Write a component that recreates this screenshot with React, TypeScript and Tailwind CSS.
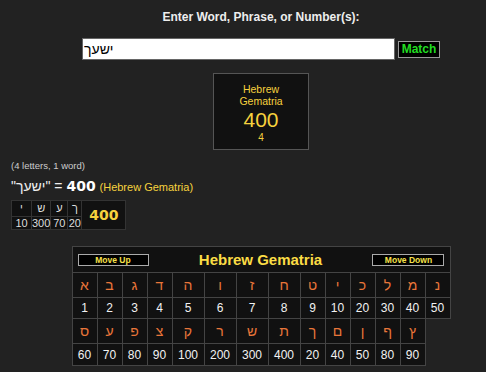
const ROW_A: [string, number][] = [
  ['א', 1], ['ב', 2], ['ג', 3], ['ד', 4], ['ה', 5], ['ו', 6], ['ז', 7],
  ['ח', 8], ['ט', 9], ['י', 10], ['כ', 20], ['ל', 30], ['מ', 40], ['נ', 50],
];

const ROW_B: [string, number][] = [
  ['ס', 60], ['ע', 70], ['פ', 80], ['צ', 90], ['ק', 100], ['ר', 200], ['ש', 300],
  ['ת', 400], ['ך', 20], ['ם', 40], ['ן', 50], ['ף', 80], ['ץ', 90],
];

// widest values (100..400) get the wider columns
const COLS = [
  'w-[25px]', 'w-[25px]', 'w-[25px]', 'w-[25px]', 'w-[32px]', 'w-[32px]', 'w-[32px]',
  'w-[32px]', 'w-[25px]', 'w-[25px]', 'w-[25px]', 'w-[25px]', 'w-[25px]', 'w-[25px]',
];

const WORD: [string, number][] = [['י', 10], ['ש', 300], ['ע', 70], ['ך', 20]];
const WORD_COLS = ['w-[20px]', 'w-[18px]', 'w-[17px]', 'w-[14px]'];

const cell = 'border border-[#444] bg-[#111] p-0 text-center align-middle';

function LetterRows({ row, numH }: { row: [string, number][]; numH: string }) {
  return (
    <>
      <tr>
        {row.map(([ch]) => (
          <td key={ch} className={`${cell} h-[25px] text-[14px] leading-[18px] text-[#e9763a]`}>
            {ch}
          </td>
        ))}
      </tr>
      <tr>
        {row.map(([ch, n]) => (
          <td key={ch} className={`${cell} ${numH} text-[12px] leading-[14px] text-[#f2f2f2]`}>
            {n}
          </td>
        ))}
      </tr>
    </>
  );
}

export default function App() {
  return (
    <div className="min-h-[372px] w-[486px] bg-[#222] font-['Liberation_Sans','DejaVu_Sans',sans-serif]">
      <div className="flex flex-col items-center pl-[36px] pt-[10px]">
        <div className="text-[12px] leading-[14px] font-bold text-[#eee]">
          Enter Word, Phrase, or Number(s):
        </div>

        <div className="mt-[14px] flex items-center gap-[3px]">
          <input
            readOnly
            value="ישעך"
            className="h-[22px] w-[313px] border border-[#666] bg-white px-[1px] text-[14px] text-black outline-none"
          />
          <button
            type="button"
            className="h-[17px] w-[42px] border border-[#999] bg-black text-[12px] leading-[15px] font-bold text-[#22dd22]"
          >
            Match
          </button>
        </div>

        <div className="mt-[13px] flex h-[77px] w-[96px] flex-col items-center border border-[#555] bg-[#111] pt-[10px] text-[#f7d23e]">
          <span className="text-[10.5px] leading-[11.5px]">Hebrew</span>
          <span className="text-[10.5px] leading-[11.5px]">Gematria</span>
          <span className="mt-[1px] text-[21px] leading-[24px]">400</span>
          <span className="text-[10px] leading-[12px]">4</span>
        </div>
      </div>

      <div className="px-[11px] pt-[10px]">
        <div className="text-[9.5px] leading-[12px] text-[#ccc]">(4 letters, 1 word)</div>
        <div className="mt-[5px] text-[14px] leading-[18px] text-[#eee]">
          "<bdi>ישעך</bdi>" ={' '}
          <span className="font-['DejaVu_Sans',sans-serif] font-bold text-white">400</span>{' '}
          <span className="text-[11px] text-[#f7d23e]">(Hebrew Gematria)</span>
        </div>

        <table className="mt-[4px] table-fixed border-collapse">
          <colgroup>
            {WORD_COLS.map((w, i) => (
              <col key={i} className={w} />
            ))}
            <col className="w-[44px]" />
          </colgroup>
          <tbody>
            <tr>
              {WORD.map(([ch]) => (
                <td key={ch} className="h-[16px] border border-[#333] bg-[#111] p-0 text-center text-[11px] leading-[13px] text-[#ddd]">
                  {ch}
                </td>
              ))}
              <td
                rowSpan={2}
                className="border border-[#333] bg-[#111] p-0 text-center font-['DejaVu_Sans',sans-serif] text-[14px] leading-[17px] font-bold text-[#f7d23e]"
              >
                400
              </td>
            </tr>
            <tr>
              {WORD.map(([ch, n]) => (
                <td key={ch} className="h-[13px] border border-[#333] bg-[#111] p-0 text-center text-[11px] leading-[12px] whitespace-nowrap text-[#ddd]">
                  {n}
                </td>
              ))}
            </tr>
          </tbody>
        </table>
      </div>

      <div className="flex justify-center pt-[16px] pl-[36px]">
        <table className="table-fixed border-collapse">
          <colgroup>
            {COLS.map((w, i) => (
              <col key={i} className={w} />
            ))}
          </colgroup>
          <tbody>
            <tr>
              <td colSpan={14} className="h-[26px] border border-[#444] bg-[#111] px-[5px] py-0">
                <div className="flex items-center justify-between">
                  <button
                    type="button"
                    className="h-[12px] w-[71px] border border-[#aaa] bg-black text-[8.5px] leading-[10px] font-bold text-[#f7e04a]"
                  >
                    Move Up
                  </button>
                  <span className="text-[15px] leading-[18px] font-bold text-[#fbdc45]">Hebrew Gematria</span>
                  <button
                    type="button"
                    className="h-[12px] w-[72px] border border-[#aaa] bg-black text-[8.5px] leading-[10px] font-bold text-[#f7e04a]"
                  >
                    Move Down
                  </button>
                </div>
              </td>
            </tr>
            <LetterRows row={ROW_A} numH="h-[21px]" />
            <LetterRows row={ROW_B} numH="h-[22px]" />
          </tbody>
        </table>
      </div>
    </div>
  );
}
